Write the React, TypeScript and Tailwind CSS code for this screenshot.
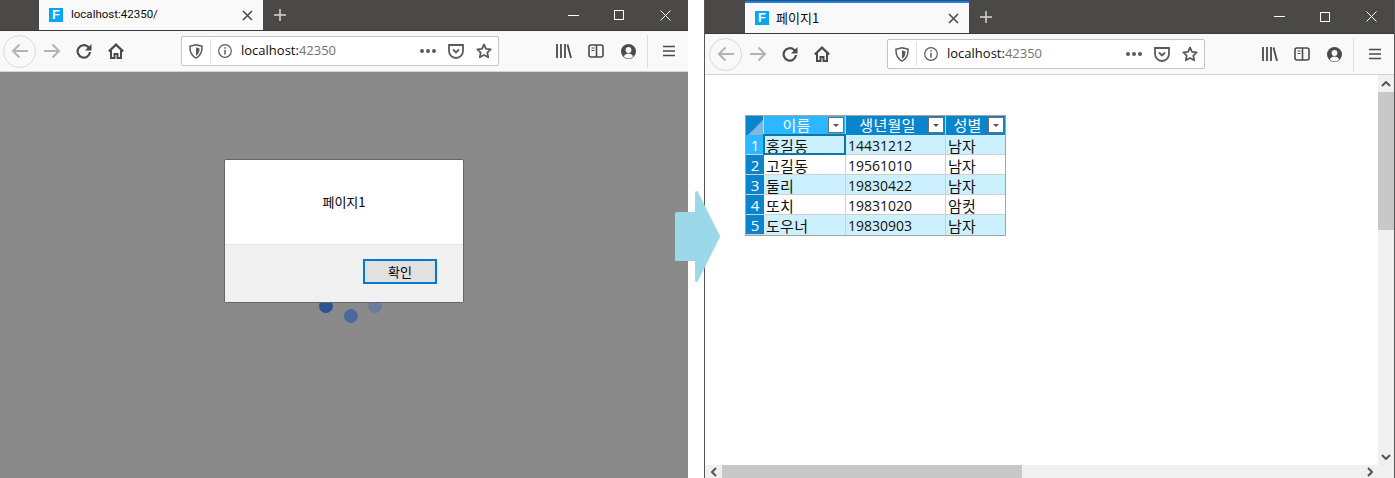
import type { ReactNode } from 'react';

const iconColor = '#4a4a4f';

function BackIcon() {
  return (
    <div className="w-[33px] h-[33px] rounded-full border border-[#d9d9da] flex items-center justify-center shrink-0">
      <svg width="18" height="16" viewBox="0 0 18 16" fill="none" stroke="#b3b3b5" strokeWidth="2">
        <path d="M17 8H2M8.5 1.5 2 8l6.5 6.5" />
      </svg>
    </div>
  );
}

function ForwardIcon() {
  return (
    <svg width="18" height="16" viewBox="0 0 18 16" fill="none" stroke="#b3b3b5" strokeWidth="2">
      <path d="M1 8h15M9.5 1.5 16 8l-6.5 6.5" />
    </svg>
  );
}

function ReloadIcon() {
  return (
    <svg width="16" height="16" viewBox="0 0 16 16" fill="none" stroke={iconColor} strokeWidth="2.2">
      <path d="M14 9a6.2 6.2 0 1 1-1.8-5L14 6" />
      <path d="M15.500 1v6.500H9" fill={iconColor} stroke="none" />
    </svg>
  );
}

function HomeIcon() {
  return (
    <svg width="16" height="16" viewBox="0 0 16 16" fill="none" stroke={iconColor} strokeWidth="2.2">
      <path d="M.8 8.500 8 1.600l7.200 6.900" />
      <path d="M3 7v8h3.500v-4h3v4H13V7" strokeWidth="2" />
    </svg>
  );
}

function ShieldIcon() {
  return (
    <svg width="14" height="15" viewBox="0 0 14 15" fill="none">
      <path d="M1 2.200 7 .8l6 1.400c.3 5.600-1.400 9.700-6 12-4.600-2.300-6.300-6.400-6-12Z" stroke="#5b5b5f" strokeWidth="1.500" />
      <path d="M7 3.200v8.600c2.300-1.400 3.500-3.800 3.600-7.400Z" fill="#5b5b5f" />
    </svg>
  );
}

function InfoIcon() {
  return (
    <svg width="14" height="14" viewBox="0 0 14 14" fill="none" stroke="#5b5b5f" strokeWidth="1.200">
      <circle cx="7" cy="7" r="6.300" />
      <path d="M7 6v4.500M7 3.200v1.500" strokeWidth="1.500" />
    </svg>
  );
}

function PocketIcon() {
  return (
    <svg width="16" height="15" viewBox="0 0 16 15" fill="none" stroke="#5b5b5f" strokeWidth="1.800">
      <path d="M1 1h14v6a7 7 0 0 1-14 0Z" />
      <path d="m5 5.500 3 3 3-3" />
    </svg>
  );
}

function StarIcon() {
  return (
    <svg width="16" height="16" viewBox="0 0 16 16" fill="none" stroke="#5b5b5f" strokeWidth="1.800" strokeLinejoin="round">
      <path d="m8 1.500 2 4.300 4.700.6-3.400 3.200.9 4.700L8 12l-4.200 2.300.9-4.700L1.300 6.400 6 5.800Z" />
    </svg>
  );
}

function LibraryIcon() {
  return (
    <svg width="16" height="14" viewBox="0 0 16 14" fill="none" stroke={iconColor} strokeWidth="1.800">
      <path d="M1 0v14M5 0v14M9 0v14M11.500 .5l3.500 13.500" />
    </svg>
  );
}

function SidebarIcon() {
  return (
    <svg width="16" height="14" viewBox="0 0 16 14" fill="none" stroke={iconColor} strokeWidth="1.600">
      <rect x="1" y="1" width="14" height="12" rx="2" />
      <path d="M8.500 1v12" />
      <path d="M3.500 4h3M3.500 6.500h3" strokeWidth="1.200" />
    </svg>
  );
}

function ProfileIcon() {
  return (
    <svg width="15" height="15" viewBox="0 0 15 15">
      <circle cx="7.500" cy="7.500" r="7.500" fill={iconColor} />
      <circle cx="7.500" cy="6" r="2.900" fill="#f9f9fa" />
      <path d="M2.800 12.500c1-2.200 2.800-3 4.700-3s3.700.8 4.700 3a6.500 6.500 0 0 1-9.400 0Z" fill="#f9f9fa" />
    </svg>
  );
}

function MenuIcon() {
  return (
    <svg width="12" height="12" viewBox="0 0 12 12" stroke={iconColor} strokeWidth="1.700">
      <path d="M0 1.500h12M0 6h12M0 10.500h12" />
    </svg>
  );
}

function Slot({ children }: { children: ReactNode }) {
  return <div className="w-[32px] h-[32px] flex items-center justify-center shrink-0">{children}</div>;
}

function TabStrip({ title, active }: { title: string; active?: boolean }) {
  return (
    <div className={`${active ? 'h-[34px] pl-[40px]' : 'h-[31px] pl-[39px]'} bg-[#4a4947] border-b border-[#3a3936] flex items-end shrink-0`}>
      <div className={`w-[224px] ${active ? 'h-[32px] border-t-2 border-[#0a84ff]' : 'h-[30px]'} bg-[#f9f9fa] flex items-center pl-[10px] pr-[10px]`}>
        <div className="w-[14px] h-[14px] bg-[#0aa5ef] text-white text-[13px] leading-[14px] font-bold text-center font-['Liberation_Sans',sans-serif]">F</div>
        <span className={`${active ? "ml-[7px] text-[13px] font-['Noto_Sans_CJK_KR',sans-serif]" : "ml-[8px] text-[11.5px] font-['Roboto',sans-serif]"} text-[#0c0c0d] flex-1`}>{title}</span>
        <svg width="11" height="11" viewBox="0 0 11 11" stroke="#4a4a4f" strokeWidth="1.600">
          <path d="m1 1 9 9M10 1l-9 9" />
        </svg>
      </div>
      <div className="self-center ml-[10px]">
        <svg width="14" height="14" viewBox="0 0 14 14" stroke="#d7d7d7" strokeWidth="1.500">
          <path d="M7 1v12M1 7h12" />
        </svg>
      </div>
      <div className="self-center ml-auto flex items-center">
        <div className="w-[46px] flex justify-center">
          <div className="w-[11px] h-px bg-white" />
        </div>
        <div className="w-[46px] flex justify-center">
          <div className="w-[10px] h-[10px] border border-white" />
        </div>
        <div className="w-[46px] flex justify-center">
          <svg width="11" height="11" viewBox="0 0 11 11" stroke="#fff" strokeWidth="1">
            <path d="m.5.500 10 10M10.500.500l-10 10" />
          </svg>
        </div>
      </div>
    </div>
  );
}

function Toolbar({ active }: { active?: boolean }) {
  return (
    <div className={`h-[41px] ${active ? 'pl-[4px]' : 'pl-[3px]'} bg-[#f9f9fa] border-b border-[#d4d4d5] flex items-center shrink-0`}>
      <BackIcon />
      <Slot><ForwardIcon /></Slot>
      <Slot><ReloadIcon /></Slot>
      <Slot><HomeIcon /></Slot>
      <div className="ml-[49px] w-[318px] h-[30px] bg-white border border-[#c4c4c6] rounded-[2px] flex items-center shrink-0">
        <div className="w-[28px] flex justify-center"><ShieldIcon /></div>
        <div className="w-px h-[24px] bg-[#e2e2e3]" />
        <div className="w-[28px] flex justify-center"><InfoIcon /></div>
        <span className="ml-[2px] text-[13px] text-[#0c0c0d] font-['Open_Sans',sans-serif] flex-1">
          localhost:<span className="text-[#737373]">42350</span>
        </span>
        <div className="w-[16px] flex justify-between mr-[12px]">
          <div className="w-[4px] h-[4px] rounded-full bg-[#5b5b5f]" />
          <div className="w-[4px] h-[4px] rounded-full bg-[#5b5b5f]" />
          <div className="w-[4px] h-[4px] rounded-full bg-[#5b5b5f]" />
        </div>
        <PocketIcon />
        <div className="ml-[12px] mr-[6px]"><StarIcon /></div>
      </div>
      <div className="ml-[49px]"><Slot><LibraryIcon /></Slot></div>
      <Slot><SidebarIcon /></Slot>
      <Slot><ProfileIcon /></Slot>
      <div className="ml-[3px] w-px h-[33px] bg-[#dcdcdd]" />
      <div className="ml-[5px]"><Slot><MenuIcon /></Slot></div>
    </div>
  );
}

const rows = [
  ['홍길동', '14431212', '남자'],
  ['고길동', '19561010', '남자'],
  ['둘리', '19830422', '남자'],
  ['또치', '19831020', '암컷'],
  ['도우너', '19830903', '남자'],
];

function HeaderCell({ label, selected, last }: { label: string; selected?: boolean; last?: boolean }) {
  return (
    <div className={`relative h-[19px] ${selected ? 'bg-[#2db7ff]' : 'bg-[#0a84cc]'} ${last ? '' : 'border-r border-[#d0d0d0]'} text-white text-center pr-[16px] leading-[17px]`}>
      {label}
      <div className="absolute right-px top-px w-[16px] h-[16px] bg-white border border-[#6d6d6d] flex items-center justify-center">
        <div className="w-0 h-0 border-x-[3px] border-x-transparent border-t-[3px] border-t-[#555]" />
      </div>
    </div>
  );
}

function DataTable() {
  return (
    <div className="w-[261px] border border-[#a3a3a3] grid grid-cols-[18px_82px_100px_59px] text-[15px] tracking-[0.3px] text-[#111] font-['Noto_Sans_CJK_KR',sans-serif]">
      <div className="h-[19px] bg-[#0a84cc] border-r border-[#d0d0d0] flex items-end justify-end">
        <div className="w-0 h-0 border-l-[15px] border-l-transparent border-b-[15px] border-b-[#7fb8db]" />
      </div>
      <HeaderCell label="이름" selected />
      <HeaderCell label="생년월일" />
      <HeaderCell label="성별" last />
      {rows.map((row, i) => (
        <div key={row[1]} className="contents">
          <div className={`h-[20px] ${i === 0 ? 'bg-[#2db7ff]' : 'bg-[#0a84cc]'} border-b border-[#d0d0d0] text-white text-center leading-[21px] tracking-normal font-['Open_Sans',sans-serif] text-[15px]`}>
            {i + 1}
          </div>
          {row.map((cell, j) => (
            <div
              key={j}
              className={`h-[20px] ${i % 2 === 0 ? 'bg-[#cdf0ff]' : 'bg-white'} ${i === 4 ? '' : 'border-b'} ${j < 2 ? 'border-r' : ''} border-[#d0d0d0] whitespace-nowrap leading-[21px] relative ${j === 1 ? "pl-[2px] tracking-normal font-['Open_Sans',sans-serif] text-[14px]" : 'pl-[2px]'}`}
            >
              {cell}
              {i === 0 && j === 0 && <div className="absolute -left-px -top-px -right-px -bottom-px border-2 border-[#0a78ab]" />}
            </div>
          ))}
        </div>
      ))}
    </div>
  );
}

function Arrow() {
  return (
    <svg className="absolute left-[675px] top-[191px]" width="46" height="91" viewBox="0 0 46 91">
      <path
        d="M1.500 22.500H21.500V1.500L43.500 45.500 21.500 89.500V68.500H1.500Z"
        fill="#9bd9ea"
        stroke="#9bd9ea"
        strokeWidth="3"
        strokeLinejoin="round"
      />
    </svg>
  );
}

export default function App() {
  return (
    <div className="relative w-[1395px] h-[478px] overflow-hidden bg-white flex">
      <div className="w-[688px] h-full flex flex-col shrink-0">
        <TabStrip title="localhost:42350/" />
        <Toolbar />
        <div className="relative flex-1 bg-[#8a8a8a]">
          <div className="absolute left-[319px] top-[227px] w-[14px] h-[14px] rounded-full bg-[#2c5291]" />
          <div className="absolute left-[344px] top-[237px] w-[14px] h-[14px] rounded-full bg-[#4b6a9c]" />
          <div className="absolute left-[368px] top-[227px] w-[14px] h-[14px] rounded-full bg-[#6a7c9e]" />
          <div className="absolute left-[224px] top-[87px] w-[240px] h-[144px] border border-[#666] rounded-[2px] bg-white flex flex-col font-['Noto_Sans_CJK_KR',sans-serif] text-[13px] text-black">
            <div className="h-[85px] flex items-center justify-center border-b border-[#e3e3e3] shrink-0">페이지1</div>
            <div className="flex-1 bg-[#f0f0f0] flex justify-end items-start pt-[14px] pr-[26px]">
              <button className="w-[74px] h-[25px] bg-[#e1e1e1] border-2 border-[#0078d7] text-[13px] leading-none">확인</button>
            </div>
          </div>
        </div>
      </div>
      <div className="w-[16px] shrink-0" />
      <div className="flex-1 h-full flex flex-col border-x border-[#555]">
        <TabStrip title="페이지1" active />
        <Toolbar active />
        <div className="flex-1 flex min-h-0">
          <div className="flex-1 pl-[40px] pt-[40px]">
            <DataTable />
          </div>
          <div className="w-[16px] bg-[#f0f0f0] flex flex-col items-center shrink-0">
            <div className="h-[17px] flex items-center">
              <svg width="10" height="6" viewBox="0 0 10 6" fill="none" stroke="#555" strokeWidth="2"><path d="m1 5 4-4 4 4" /></svg>
            </div>
            <div className="w-full h-[138px] bg-[#c8c8c8]" />
            <div className="flex-1" />
            <div className="h-[17px] flex items-center">
              <svg width="10" height="6" viewBox="0 0 10 6" fill="none" stroke="#555" strokeWidth="2"><path d="m1 1 4 4 4-4" /></svg>
            </div>
          </div>
        </div>
        <div className="h-[13px] bg-[#f0f0f0] flex items-center shrink-0">
          <div className="w-[17px] flex justify-center">
            <svg width="6" height="10" viewBox="0 0 6 10" fill="none" stroke="#555" strokeWidth="2"><path d="M5 1 1 5l4 4" /></svg>
          </div>
          <div className="w-[300px] h-full bg-[#c8c8c8]" />
          <div className="flex-1" />
          <div className="w-[17px] flex justify-center mr-[16px]">
            <svg width="6" height="10" viewBox="0 0 6 10" fill="none" stroke="#555" strokeWidth="2"><path d="m1 1 4 4-4 4" /></svg>
          </div>
        </div>
      </div>
      <Arrow />
    </div>
  );
}
